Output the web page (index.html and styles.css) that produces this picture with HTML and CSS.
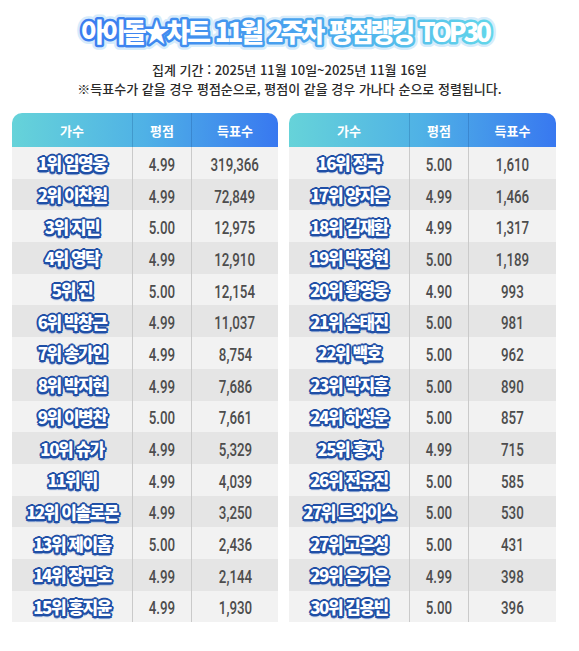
FILE: index.html
```html
<!DOCTYPE html>
<html lang="ko">
<head>
    <meta charset="UTF-8">
    <meta name="viewport" content="width=device-width, initial-scale=1.0">
    <title>아이돌★차트 11월 2주차 평점랭킹 TOP30</title>
    <link rel="stylesheet" href="styles.css">
</head>
<body>
    <svg class="title" width="579" height="58" viewBox="0 0 579 58">
        <defs>
            <linearGradient id="titleStroke" x1="0" y1="0" x2="1" y2="0">
                <stop offset="0" stop-color="#3a7cf0"/>
                <stop offset="0.55" stop-color="#4aa6ee"/>
                <stop offset="1" stop-color="#62d6ea"/>
            </linearGradient>
        </defs>
        <text class="title-glow" x="285" y="42" text-anchor="middle">아이돌★차트 11월 2주차 평점랭킹 TOP30</text>
        <text class="title-text" x="285" y="42" text-anchor="middle">아이돌★차트 11월 2주차 평점랭킹 TOP30</text>
    </svg>
    <p class="period">집계 기간 : 2025년 11월 10일~2025년 11월 16일</p>
    <p class="note">※득표수가 같을 경우 평점순으로, 평점이 같을 경우 가나다 순으로 정렬됩니다.</p>

    <div class="charts">
        <div class="chart" id="chartLeft">
            <div class="chart-head"><div>가수</div><div>평점</div><div>득표수</div></div>
        </div>
        <div class="chart" id="chartRight">
            <div class="chart-head"><div>가수</div><div>평점</div><div>득표수</div></div>
        </div>
    </div>

    <script>
        const ranking = [
            ["1위 임영웅", "4.99", "319,366"],
            ["2위 이찬원", "4.99", "72,849"],
            ["3위 지민", "5.00", "12,975"],
            ["4위 영탁", "4.99", "12,910"],
            ["5위 진", "5.00", "12,154"],
            ["6위 박창근", "4.99", "11,037"],
            ["7위 송가인", "4.99", "8,754"],
            ["8위 박지현", "4.99", "7,686"],
            ["9위 이병찬", "5.00", "7,661"],
            ["10위 슈가", "4.99", "5,329"],
            ["11위 뷔", "4.99", "4,039"],
            ["12위 이솔로몬", "4.99", "3,250"],
            ["13위 제이홉", "5.00", "2,436"],
            ["14위 장민호", "4.99", "2,144"],
            ["15위 홍지윤", "4.99", "1,930"],
            ["16위 정국", "5.00", "1,610"],
            ["17위 양지은", "4.99", "1,466"],
            ["18위 김재환", "4.99", "1,317"],
            ["19위 박장현", "5.00", "1,189"],
            ["20위 황영웅", "4.90", "993"],
            ["21위 손태진", "5.00", "981"],
            ["22위 백호", "5.00", "962"],
            ["23위 박지훈", "5.00", "890"],
            ["24위 하성운", "5.00", "857"],
            ["25위 홍자", "4.99", "715"],
            ["26위 전유진", "5.00", "585"],
            ["27위 트와이스", "5.00", "530"],
            ["27위 고은성", "5.00", "431"],
            ["29위 은가은", "4.99", "398"],
            ["30위 김용빈", "5.00", "396"]
        ];

        const left = document.getElementById('chartLeft');
        const right = document.getElementById('chartRight');

        // 15위까지 왼쪽, 나머지는 오른쪽 표
        ranking.forEach((item, i) => {
            const row = document.createElement('div');
            row.className = 'row';
            row.innerHTML =
                `<div class="name">${item[0]}</div>` +
                `<div class="num"><span>${item[1]}</span></div>` +
                `<div class="num"><span>${item[2]}</span></div>`;
            (i < 15 ? left : right).appendChild(row);
        });
    </script>
</body>
</html>
```

FILE: styles.css
```css
body {
    margin: 0;
    background-color: #fff;
    font-family: "Noto Sans CJK KR", "Noto Sans", sans-serif;
}
.title {
    display: block;
}
.title text {
    font-family: "Noto Sans CJK KR", sans-serif;
    font-weight: 900;
    font-size: 26px;
    letter-spacing: -3.2px;
    word-spacing: 3px;
    stroke-linejoin: round;
    paint-order: stroke fill;
}
.title-glow {
    fill: #fff;
    stroke: #d6ecfb;
    stroke-width: 10px;
}
.title-text {
    fill: #fff;
    stroke: url(#titleStroke);
    stroke-width: 5px;
}
.period, .note {
    margin: 0;
    text-align: center;
    font-size: 13px;
    line-height: 19px;
    color: #2a2a2a;
    font-weight: 500;
}
.period {
    margin-top: 2px;
}
.charts {
    display: flex;
    gap: 11px;
    padding-left: 12px;
    margin-top: 15px;
}
.chart {
    width: 266px;
    border-radius: 10px 10px 0 0;
    overflow: hidden;
}
#chartRight {
    width: 267px;
}
.chart-head, .row {
    display: grid;
    grid-template-columns: 120px 59px 1fr;
}
.chart-head {
    height: 34px;
    background: linear-gradient(90deg, #66d3d9 0%, #4fb1e6 50%, #3878f0 100%);
    color: #fff;
    font-size: 13px;
    font-weight: 700;
}
.chart-head div {
    display: flex;
    align-items: center;
    justify-content: center;
}
.chart-head div + div {
    border-left: 1px solid rgba(20, 70, 130, 0.25);
}
.row {
    height: 31.7px;
    background-color: #f2f2f2;
}
.row:nth-child(odd) {
    background-color: #e5e5e5;
}
.row div {
    display: flex;
    align-items: center;
    justify-content: center;
}
.row div + div {
    border-left: 1px solid #cacaca;
}
.name {
    font-size: 17px;
    font-weight: 900;
    letter-spacing: -1.5px;
    color: #fff;
    text-shadow:
        2px 0 0 #1f4fa6, -2px 0 0 #1f4fa6, 0 2px 0 #1f4fa6, 0 -2px 0 #1f4fa6,
        1.5px 1.5px 0 #1f4fa6, -1.5px 1.5px 0 #1f4fa6, 1.5px -1.5px 0 #1f4fa6, -1.5px -1.5px 0 #1f4fa6,
        0 3px 1px #6f8fc8;
}
.num span {
    display: inline-block;
    font-family: Roboto, "Liberation Sans", sans-serif;
    font-size: 18px;
    font-weight: 500;
    color: #4d4d4d;
    transform: scaleX(0.74);
    padding-top: 3px;
}
```
